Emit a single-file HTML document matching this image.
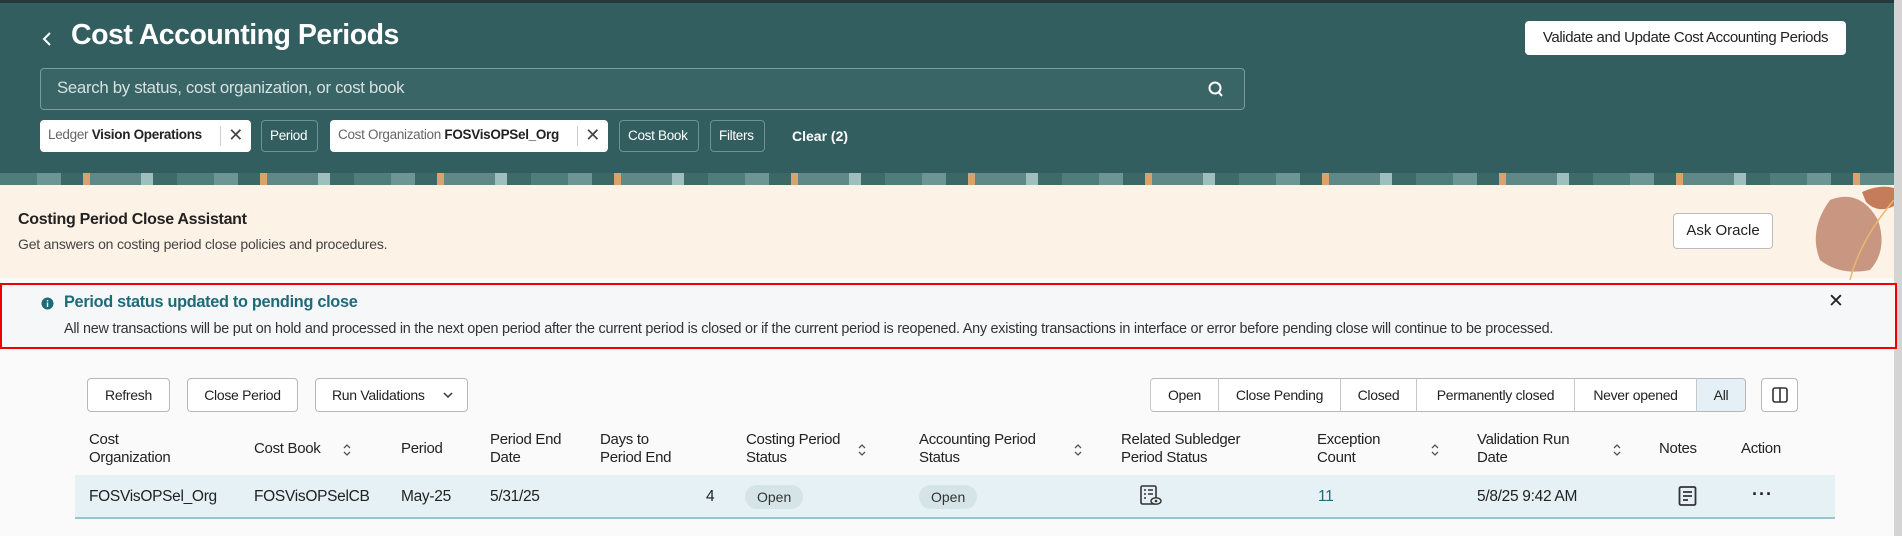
<!DOCTYPE html>
<html><head><meta charset="utf-8"><style>
*{box-sizing:border-box;margin:0;padding:0}
body{width:1902px;height:536px;overflow:hidden;background:#fafafa;font-family:"Liberation Sans",sans-serif;color:#222;position:relative}
.a{position:absolute;white-space:nowrap}
.hdr{position:absolute;left:0;top:0;width:1894px;height:185px;background:#325e5f}
.band{position:absolute;left:0;top:173px;width:1894px;height:12px;background:repeating-linear-gradient(90deg,#4f7d7c 0 37px,#6d9593 37px 61px,#3c6767 61px 83px,#d9a36b 83px 90px,#5f8887 90px 141px,#9fbfbe 141px 153px,#3f6a6a 153px 177px)}
.chip{position:absolute;top:120px;height:32px;border-radius:4px;font-size:13.5px;line-height:30px;padding:0 8px;letter-spacing:-0.3px}
.chipw{background:#fff;color:#666}
.chipw b{color:#222;font-weight:bold}
.chipo{border:1px solid #6f9293;color:#fff}
.btn{position:absolute;height:34px;border:1px solid #b8b8b8;border-radius:4px;background:#fff;font-size:14px;line-height:32px;text-align:center;color:#222;letter-spacing:-0.3px}
.seg{position:absolute;top:378px;height:34px;border-top:1px solid #b8b8b8;border-bottom:1px solid #b8b8b8;border-left:1px solid #c8c8c8;font-size:14px;line-height:32px;text-align:center;background:#fff;letter-spacing:-0.3px}
.th{position:absolute;font-size:15px;line-height:18px;color:#222;letter-spacing:-0.3px}
.srt{position:absolute;top:442px}
.td{position:absolute;top:487px;font-size:15.5px;line-height:20px;letter-spacing:-0.3px}
.pill{position:absolute;top:485px;height:24px;border-radius:12px;background:#d5e4e6;font-size:14px;line-height:24px;padding:0 12px;color:#333}
</style></head><body>
<div class="hdr"></div>
<div class="a" style="left:1894px;top:0;width:8px;height:536px;background:#d4d4d4"></div>
<div class="a" style="left:0;top:0;width:1894px;height:3px;background:#26393a"></div>
<svg class="a" style="left:40px;top:30px" width="14" height="18"><path d="M10 3 L4 9 L10 15" fill="none" stroke="#fff" stroke-width="2"/></svg>
<div class="a" style="left:71px;top:19px;font-size:28.5px;font-weight:bold;color:#fff;letter-spacing:-0.5px">Cost Accounting Periods</div>
<div class="a" style="left:1525px;top:21px;width:321px;height:34px;background:#fff;border-radius:4px;font-size:15px;line-height:34px;text-align:center;color:#222;letter-spacing:-0.4px">Validate and Update Cost Accounting Periods</div>
<div class="a" style="left:40px;top:68px;width:1205px;height:42px;border:1px solid #7a9a9b;border-radius:4px;background:#3a6566"></div>
<div class="a" style="left:57px;top:78px;font-size:16.8px;color:#d6e0e0;letter-spacing:-0.3px">Search by status, cost organization, or cost book</div>
<svg class="a" style="left:1207px;top:80px" width="18" height="18"><circle cx="8" cy="8" r="5.5" fill="none" stroke="#fff" stroke-width="2"/><path d="M11.5 12 L15 16" stroke="#fff" stroke-width="2"/></svg>
<div class="chip chipw" style="left:40px;width:211px">Ledger <b>Vision Operations</b><span style="position:absolute;right:30px;top:6px;height:20px;border-left:1px solid #ccc"></span><span style="position:absolute;right:8px;top:0;font-size:18px;color:#444">✕</span></div>
<div class="chip chipo" style="left:261px;width:57px">Period</div>
<div class="chip chipw" style="left:330px;width:278px">Cost Organization <b>FOSVisOPSel_Org</b><span style="position:absolute;right:30px;top:6px;height:20px;border-left:1px solid #ccc"></span><span style="position:absolute;right:8px;top:0;font-size:18px;color:#444">✕</span></div>
<div class="chip chipo" style="left:619px;width:80px">Cost Book</div>
<div class="chip chipo" style="left:710px;width:55px">Filters</div>
<div class="a" style="left:792px;top:120px;line-height:32px;font-size:14px;font-weight:bold;color:#fff">Clear (2)</div>
<div class="band"></div>
<div class="a" style="left:0;top:185px;width:1894px;height:93px;background:#fdf2e6"></div>
<div class="a" style="left:18px;top:211px;font-size:16px;font-weight:bold;color:#222;letter-spacing:-0.3px">Costing Period Close Assistant</div>
<div class="a" style="left:18px;top:236px;font-size:14px;color:#444;letter-spacing:-0.2px">Get answers on costing period close policies and procedures.</div>
<div class="a" style="left:1673px;top:213px;width:100px;height:36px;border:1px solid #bbb;border-radius:4px;background:#fff;font-size:15px;line-height:34px;text-align:center">Ask Oracle</div>
<svg class="a" style="left:1800px;top:180px" width="94" height="100"><path d="M62 12 Q80 4 94 8 L94 26 Q78 34 66 22Z" fill="#c47c5a"/><path d="M30 20 Q60 8 78 40 Q88 70 70 90 Q40 96 20 80 Q8 50 30 20Z" fill="#c99781"/><path d="M50 100 Q60 60 94 20" fill="none" stroke="#eab66e" stroke-width="1.5"/></svg>
<div class="a" style="left:0;top:283px;width:1897px;height:66px;border:2px solid #e00;background:#f6f7f8"></div>
<svg class="a" style="left:41px;top:297px" width="13" height="13"><circle cx="6.5" cy="6.5" r="6" fill="#1f6a78"/><rect x="5.8" y="5.5" width="1.4" height="4.5" fill="#fff"/><rect x="5.8" y="3" width="1.4" height="1.4" fill="#fff"/></svg>
<div class="a" style="left:64px;top:293px;font-size:16.3px;font-weight:bold;color:#1f6a78;letter-spacing:-0.3px">Period status updated to pending close</div>
<div class="a" style="left:64px;top:321px;font-size:14.4px;color:#333;letter-spacing:-0.25px">All new transactions will be put on hold and processed in the next open period after the current period is closed or if the current period is reopened. Any existing transactions in interface or error before pending close will continue to be processed.</div>
<div class="a" style="left:1828px;top:290px;font-size:19px;color:#222">✕</div>
<div class="btn" style="left:87px;top:378px;width:83px">Refresh</div>
<div class="btn" style="left:187px;top:378px;width:111px">Close Period</div>
<div class="btn" style="left:315px;top:378px;width:153px;text-align:left;padding-left:16px">Run Validations <svg style="position:absolute;right:14px;top:13px" width="10" height="7"><path d="M1 1L5 5L9 1" fill="none" stroke="#333" stroke-width="1.5"/></svg></div>
<div class="seg" style="left:1150px;width:68px;border-radius:4px 0 0 4px">Open</div>
<div class="seg" style="left:1218px;width:122px">Close Pending</div>
<div class="seg" style="left:1340px;width:76px">Closed</div>
<div class="seg" style="left:1416px;width:158px">Permanently closed</div>
<div class="seg" style="left:1574px;width:122px">Never opened</div>
<div class="seg" style="left:1696px;width:50px;background:#e4f0f6;border-right:1px solid #b8b8b8;border-radius:0 4px 4px 0">All</div>
<div class="btn" style="left:1761px;top:378px;width:37px"><svg style="margin-top:8px" width="16" height="16"><rect x="1" y="1" width="14" height="14" rx="2" fill="none" stroke="#333" stroke-width="1.6"/><path d="M8 1V15" stroke="#333" stroke-width="1.6"/></svg></div>
<div class="th" style="left:89px;top:431px">Cost<br>Organization</div>
<div class="th" style="left:254px;top:440px">Cost Book</div><svg class="srt" style="left:342px" width="10" height="16"><path d="M2 6L5 3L8 6M2 10L5 13L8 10" fill="none" stroke="#555" stroke-width="1.3"/></svg>
<div class="th" style="left:401px;top:440px">Period</div>
<div class="th" style="left:490px;top:431px">Period End<br>Date</div>
<div class="th" style="left:600px;top:431px">Days to<br>Period End</div>
<div class="th" style="left:746px;top:431px">Costing Period<br>Status</div><svg class="srt" style="left:857px" width="10" height="16"><path d="M2 6L5 3L8 6M2 10L5 13L8 10" fill="none" stroke="#555" stroke-width="1.3"/></svg>
<div class="th" style="left:919px;top:431px">Accounting Period<br>Status</div><svg class="srt" style="left:1073px" width="10" height="16"><path d="M2 6L5 3L8 6M2 10L5 13L8 10" fill="none" stroke="#555" stroke-width="1.3"/></svg>
<div class="th" style="left:1121px;top:431px">Related Subledger<br>Period Status</div>
<div class="th" style="left:1317px;top:431px">Exception<br>Count</div><svg class="srt" style="left:1430px" width="10" height="16"><path d="M2 6L5 3L8 6M2 10L5 13L8 10" fill="none" stroke="#555" stroke-width="1.3"/></svg>
<div class="th" style="left:1477px;top:431px">Validation Run<br>Date</div><svg class="srt" style="left:1612px" width="10" height="16"><path d="M2 6L5 3L8 6M2 10L5 13L8 10" fill="none" stroke="#555" stroke-width="1.3"/></svg>
<div class="th" style="left:1659px;top:440px">Notes</div>
<div class="th" style="left:1741px;top:440px">Action</div>
<div class="a" style="left:75px;top:475px;width:1760px;height:44px;background:#e5f1f4;border-bottom:2px solid #9fc3cc"></div>
<div class="td" style="left:89px">FOSVisOPSel_Org</div>
<div class="td" style="left:254px">FOSVisOPSelCB</div>
<div class="td" style="left:401px">May-25</div>
<div class="td" style="left:490px">5/31/25</div>
<div class="td" style="left:706px">4</div>
<div class="pill" style="left:745px">Open</div>
<div class="pill" style="left:919px">Open</div>
<svg class="a" style="left:1140px;top:485px" width="22" height="22"><rect x="1" y="1" width="15" height="18" rx="1.5" fill="none" stroke="#333" stroke-width="1.6"/><path d="M4 5h2M8 5h5M4 9h2M8 9h5M4 13h2" stroke="#333" stroke-width="1.5"/><ellipse cx="16" cy="16" rx="5" ry="3.2" fill="#e5f1f4" stroke="#333" stroke-width="1.4"/><circle cx="16" cy="16" r="1.3" fill="#333"/></svg>
<div class="td" style="left:1318px;color:#1f6a78">11</div>
<div class="td" style="left:1477px">5/8/25 9:42 AM</div>
<svg class="a" style="left:1678px;top:486px" width="20" height="20"><rect x="1.5" y="1" width="16" height="18" rx="1.5" fill="none" stroke="#333" stroke-width="1.8"/><path d="M5 6h9M5 10h9M5 14h5" stroke="#333" stroke-width="1.7"/></svg>
<div class="a" style="left:1752px;top:484px;font-size:18px;font-weight:bold;letter-spacing:1px">···</div>
</body></html>
